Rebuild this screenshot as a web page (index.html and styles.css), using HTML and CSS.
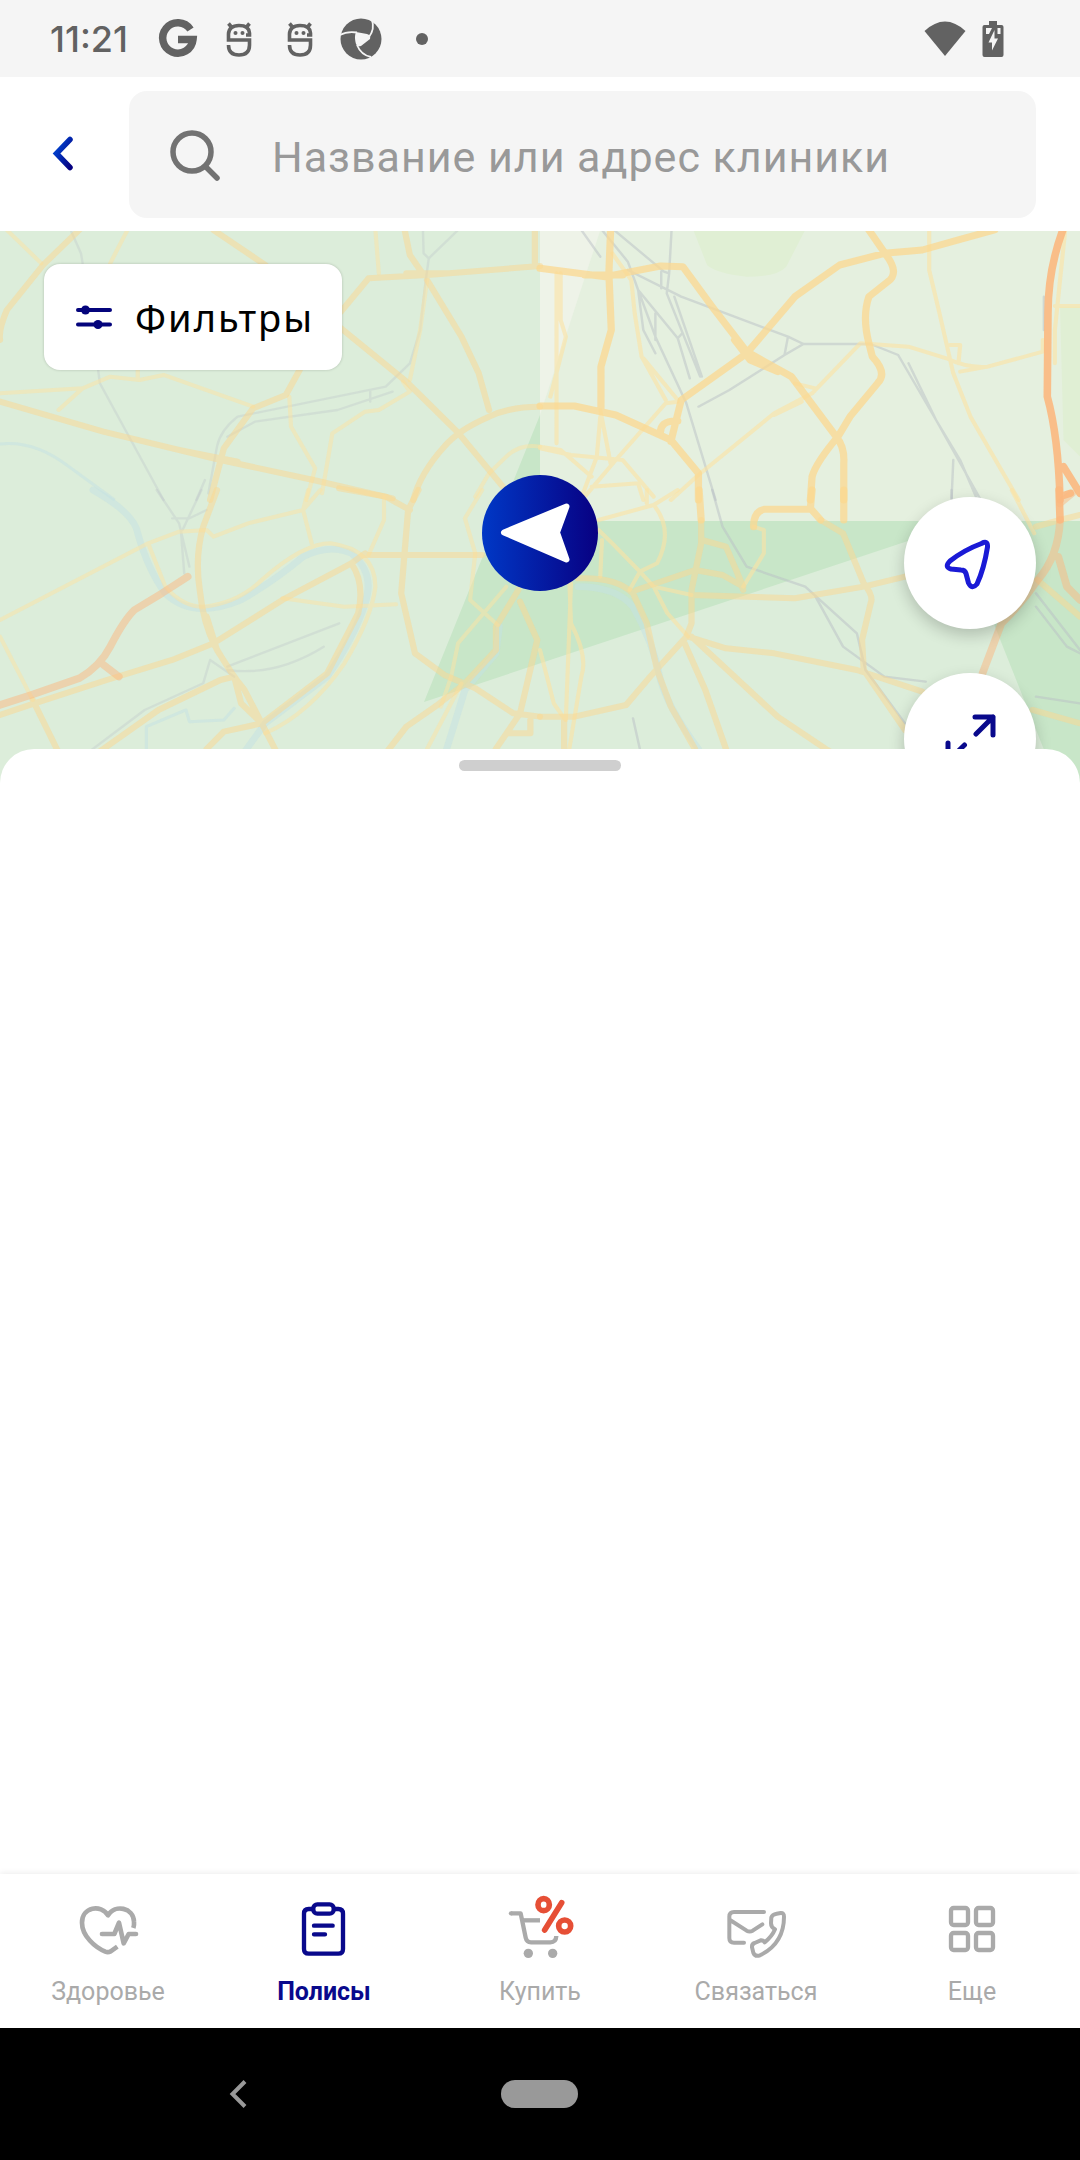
FILE: index.html
```html
<!DOCTYPE html>
<html lang="ru">
<head>
<meta charset="utf-8">
<meta name="viewport" content="width=device-width, initial-scale=1">
<title>Клиники</title>
<link rel="stylesheet" href="styles.css">
</head>
<body>
<div class="status">
  <span class="clock">11:21</span>
  <div class="notices">
    <svg class="notice" viewBox="0 0 44 44" aria-hidden="true"><path d="M34.5 12.5A15.200 15.200 0 1 0 37 22.500H22" fill="none" stroke="#626262" stroke-width="7.500"/></svg>
    <svg class="notice" viewBox="0 0 44 44" aria-hidden="true"><g fill="none" stroke="#626262" stroke-width="3.600"><path d="M29 18H32.500V16Q32 8.500 22 8.500T11.500 17V23H32.500V28Q32.500 38 22 38T11.500 28M14 9.500L11.500 6.500M30 9.500L32.500 6.500"/></g><circle cx="18.500" cy="16" r="2" fill="#626262"/><circle cx="25.500" cy="16" r="2" fill="#626262"/></svg>
    <svg class="notice" viewBox="0 0 44 44" aria-hidden="true"><g fill="none" stroke="#626262" stroke-width="3.600"><path d="M29 18H32.500V16Q32 8.500 22 8.500T11.500 17V23H32.500V28Q32.500 38 22 38T11.500 28M14 9.500L11.500 6.500M30 9.500L32.500 6.500"/></g><circle cx="18.500" cy="16" r="2" fill="#626262"/><circle cx="25.500" cy="16" r="2" fill="#626262"/></svg>
    <svg class="notice" viewBox="0 0 44 44" aria-hidden="true"><circle cx="22" cy="22" r="20.500" fill="#626262"/><path d="M17 15L28 17Q32 18 31 22L22 29Q18 30 17 27Q15 20 17 15Z" fill="#f5f5f5"/><path d="M1 18Q8 14 18 15.500M33 3Q36 12 30 20M18 28Q22 38 32 40" fill="none" stroke="#f5f5f5" stroke-width="1.800"/></svg>
    <svg class="notice" viewBox="0 0 44 44" aria-hidden="true"><circle cx="22" cy="22" r="6" fill="#626262"/></svg>
  </div>
  <div class="system">
    <svg class="wifi" viewBox="0 0 42 36" aria-hidden="true"><path d="M0.500 10Q21 -9 41.500 10L21 35Z" fill="#626262"/></svg>
    <svg class="battery" viewBox="0 0 22 36" aria-hidden="true"><path d="M7 0H15V4H19.500Q21.500 4 21.500 6V34Q21.500 36 19.500 36H2.500Q0.500 36 0.500 34V6Q0.500 4 2.500 4H7Z" fill="#626262"/><path d="M4 7H10L7 13H4ZM15.500 7H18.500V13H15.500ZM12.500 9V17.500H16L10 29.500V21.500H6.500Z" fill="#f5f5f5"/></svg>
  </div>
</div>

<header class="header">
  <button class="back" type="button" aria-label="Назад">
    <svg viewBox="0 0 40 40" aria-hidden="true"><defs><linearGradient id="ink" x1="0" y1="0" x2="1" y2="1"><stop offset="0.200" stop-color="#003cc8"/><stop offset="1" stop-color="#050080"/></linearGradient></defs><path d="M25 4.500L11.500 18.500L25 32.500" fill="none" stroke="url(#ink)" stroke-width="5.500" stroke-linecap="round"/></svg>
  </button>
  <label class="search">
    <svg class="search-icon" viewBox="0 0 56 56" aria-hidden="true"><circle cx="25" cy="25" r="19" fill="none" stroke="#727272" stroke-width="5.500"/><path d="M39 40L50 51" stroke="#727272" stroke-width="5.500" stroke-linecap="round"/></svg>
    <input class="search-input" type="search" placeholder="Название или адрес клиники" aria-label="Поиск клиники">
  </label>
</header>

<main class="main">
  <section class="map" aria-label="Карта">
    <svg class="map-canvas" viewBox="0 0 1080 554" preserveAspectRatio="xMidYMid slice" aria-hidden="true">
      <rect width="1080" height="554" fill="#dcedda"/>
      <path d="M540 0H1080V290H540Z" fill="#e5f0df"/>
      <path d="M540 0H600L540 184Z" fill="#eef3e8"/>
      <path d="M540 184V290H968L424 471ZM953 290H1080V554H1058Z" fill="#c8e6c8"/>

      <g class="tile west" transform="translate(0 -1) scale(.3444 .3333)">
        <g class="river"><path d="M0 642Q100 630 200 710L330 808"/></g>
        <g class="rail"><path d="M205 0L235 70L240 100M285 420L290 460L475 810M1228 0L1230 70L1245 85L1330 0M1245 85L1235 160L1220 300L1190 400L1120 470L690 560Q640 600 630 650L605 790M1140 485L980 540L740 575L660 620M1075 485V515M595 750L570 810"/></g>
        <g class="minor"><path d="M20 0L120 100M370 0L320 100M1090 0L1100 130M0 490L240 475L320 440L405 450L475 435L735 530M240 475L170 540M400 420V450M840 500L845 590L915 715L890 810M935 790L965 610L1060 545L1100 540L1190 485L1170 455M1240 150L1220 300L1190 450M1568 650Q1510 640 1470 680L1420 730L1380 800"/></g>
        <g class="major"><path d="M230 0L125 105L20 240Q-5 300 0 330M620 0L770 105L990 295L1180 455L1330 608L1460 770M1175 0L1190 75L1230 135M990 245L1070 145L1240 135L1568 108M1240 150L1340 320L1390 430L1420 540M1553 0V105M0 515L300 605L640 690L910 750L1140 805M870 420L830 495L735 535L650 655L610 810M1568 530Q1480 530 1420 560Q1330 600 1290 650Q1220 730 1200 810M1180 130H1310M520 660L690 695"/></g>
      </g>

      <g class="tile west" transform="translate(0 259) scale(.3444 .3333)">
        <g class="river wide"><path d="M270 0Q390 70 400 130Q430 240 480 310Q560 390 700 330Q800 270 880 200Q960 160 1020 190Q1090 250 1060 340Q1030 440 950 560L770 700L700 800M1260 900L1350 600L1440 490L1450 410"/></g>
        <g class="river"><path d="M425 900V710L540 660L550 695L650 690L680 655"/></g>
        <g class="rail"><path d="M455 0L520 100L550 230M585 0L530 120M500 85H550L600 60M525 120L535 250M660 540Q800 560 940 470M660 530L985 400M150 870L420 660L590 580L610 510L680 560"/></g>
        <g class="minor"><path d="M0 390L430 160L520 125L600 120L620 140L720 100L880 60L930 0M895 0L880 60L905 160M430 160L480 290Q530 350 590 350Q690 340 760 270Q880 160 960 160Q1090 180 1090 290Q1080 380 1000 520Q900 670 770 730M820 325L1000 350L1150 343M1115 20V90L1070 195M1400 0L1350 85L1380 190L1365 330L1445 405M1470 290L1330 460L1310 560L1280 650M1240 777L1340 580M0 440L95 630"/></g>
        <g class="major"><path d="M630 0L590 110Q565 200 580 300Q590 400 625 470Q670 550 710 600L760 700L860 900M600 380L630 480L670 545M985 -5L1120 20L1190 60M1215 0L1185 60L1165 310L1205 490L1290 555L1380 595L1490 670L1568 680M1060 195H1400M0 675L100 640L310 570L500 510L620 460L820 330L1020 220L1060 190M1020 220Q1060 280 1040 370L950 550L760 700L650 725L600 777M200 850L460 660L640 570L680 560L700 640L760 700M95 630L165 777L200 860M1090 830L1180 710L1270 645L1350 580M1350 580L1440 480L1440 410L1505 300M1510 335L1560 450L1510 670L1440 777M1480 730H1540V690"/></g>
        <g class="trunk"><path d="M0 645L90 615L230 565Q290 530 320 470Q360 390 390 360L470 310L545 260M295 520L345 560"/></g>
      </g>

      <g class="tile" transform="translate(540 -1) scale(.3444 .3333)">
        <path d="M445 0H770L715 110Q690 140 600 140Q510 130 485 105ZM1510 230H1568V680L1520 630Z" fill="#e0efd4"/>
        <g class="rail"><path d="M120 0L175 80M180 0L255 95L285 180L335 320L425 520L510 810M215 0L360 125L375 130L382 0M255 120L410 200L720 320L765 342H960L1040 375L1150 570L1280 810M765 342L710 375L550 480L460 530M375 130L368 190L465 440M285 180L400 325L435 445M400 325L413 310M335 250V330M352 125V175M1200 690L1195 810M720 320L710 375M1070 400L1150 570L1220 690L1270 810M285 180L300 300L335 370M390 200L470 440M1463 200V300"/></g>
        <g class="minor"><path d="M48 130V640M60 130V270L75 320L30 500M265 150L275 250L295 380L365 510M400 510L300 385M400 515L365 520L220 690L130 800M380 810L460 735L680 550L790 490L930 340L1070 350L1180 385Q1240 415 1300 410L1460 365V330M680 555L760 515M740 460L800 475M1130 0V120L1160 250L1200 430L1250 560L1390 810M1190 345H1220L1215 400M1220 425L1300 410M1495 228H1568M1525 0L1495 300V400M0 655L90 675L240 690L330 800M0 650L60 660L150 740M175 540L205 700M150 770L285 760L300 810M175 560L165 680L125 790M265 150L210 70"/></g>
        <g class="major"><path d="M0 115L190 140L350 108L415 110L500 230L600 365L730 440L860 620Q885 650 882 700V810M205 0L200 130L207 300L177 410V540M0 528H100L220 555L380 630L460 730V810M380 635L410 510L600 370L740 200L870 105L1000 70L1110 60L1220 28L1320 0M955 0L1005 75Q1045 130 1010 155L955 200Q935 260 955 340L965 380Q1010 430 980 460L900 560L865 620Q800 700 790 740L785 810M350 615Q345 570 400 573M565 330L610 390L690 425M130 135H240"/></g>
        <g class="trunk"><path d="M1518 0Q1475 120 1475 250L1473 500Q1505 620 1510 810M1520 710L1568 790M1510 800L1540 790"/></g>
      </g>

      <g class="tile" transform="translate(540 259) scale(.3444 .3333)">
        <g class="river wide"><path d="M110 290Q220 290 270 350Q330 460 350 570Q370 650 460 777"/></g>
        <g class="rail"><path d="M500 0L530 110L600 230L770 290L920 430L945 540L1060 700M800 320L880 470L1000 560L1120 575M1440 310L1568 480M1195 0V25M1440 620L1568 640M1440 350L1530 470L1568 490M270 685L290 777"/></g>
        <g class="minor"><path d="M170 90L330 45L400 0M330 45Q390 120 340 220L290 245L260 300M170 120L210 160L290 245L330 290L370 370L430 440M85 270L90 400Q140 500 120 560L85 777M90 280L75 690M0 480L40 640L70 685M180 150L175 260M310 0V40M620 110L650 120V190L590 290M330 290L440 315M1370 0L1435 130"/></g>
        <g class="major soft"><path d="M815 90L880 130L940 280Q970 320 960 340L935 450L940 540L1060 720M440 315L740 325L940 290L1060 260M470 150L540 170L590 290L530 255L450 240L280 300M430 440L540 475L680 490L920 540L1110 605M440 440L690 680L830 777L900 820M420 460L480 600L540 777M340 540L380 650L450 777M110 265Q220 260 270 310L310 400L340 540M70 685V777M1440 110L1510 90L1568 75M1430 660L1568 700M1445 270L1568 380M100 680L250 645L320 560L425 440L440 400V300L468 160V90M100 680H0M570 240L590 300"/></g>
        <g class="major"><path d="M462 0L468 90M790 0L785 55L815 90M785 58H650Q620 65 620 110M882 0V90"/></g>
        <g class="trunk"><path d="M1507 0L1510 90"/></g>
        <g class="trunk soft"><path d="M1510 90Q1505 200 1445 270Q1400 340 1340 400L1285 550M1505 200L1530 290L1568 330M1545 10L1510 40"/></g>
      </g>
    </svg>

    <button class="filters" type="button">
      <svg class="filters-icon" viewBox="0 0 36 24" aria-hidden="true"><path d="M2 5H34M2 19.500H34" stroke="#04047c" stroke-width="4" stroke-linecap="round"/><circle cx="9.500" cy="5" r="4.500" fill="#04047c"/><circle cx="22" cy="19.500" r="4.500" fill="#04047c"/></svg>
      Фильтры
    </button>

    <svg class="marker" viewBox="0 0 116 116" role="img" aria-label="Клиника"><defs><linearGradient id="pin"><stop offset="0" stop-color="#0038c6"/><stop offset="1" stop-color="#080082"/></linearGradient></defs><circle cx="58" cy="58" r="58" fill="url(#pin)"/><path d="M22 57.500L84.500 31.500L75 57.500L84.500 84.500Z" fill="#fff" stroke="#fff" stroke-width="6" stroke-linejoin="round"/></svg>

    <div class="map-controls">
      <button class="round" type="button" aria-label="Моё местоположение">
        <svg viewBox="0 0 132 132" aria-hidden="true"><path d="M77.500 46.500Q84 43 83.500 50Q80 72 73 87Q68 93 64.500 86L62 76.500Q61 73 57 73L47 72Q40 70 46 64Q60 53 77.500 46.500Z" fill="none" stroke="#1a1ad6" stroke-width="5" stroke-linejoin="round"/></svg>
      </button>
      <button class="round" type="button" aria-label="На весь экран">
        <svg viewBox="0 0 132 132" aria-hidden="true"><path d="M71 44H89V62M89 44L72 61M44 70V88H62M44 88L60.500 72" fill="none" stroke="#09098c" stroke-width="5" stroke-linecap="round" stroke-linejoin="round"/></svg>
      </button>
    </div>
  </section>

  <section class="sheet" aria-label="Список клиник">
    <div class="grip"></div>
  </section>
</main>

<nav class="tabs">
  <a class="tab" href="#health">
    <svg class="tab-icon" viewBox="216 102 216 216" aria-hidden="true"><g fill="none" stroke="currentColor" stroke-width="14" stroke-linejoin="round"><path d="M400 204Q403 195 402 185C400 142 345 132 324 166C303 132 246 140 246 188C246 228 285 262 316 275Q324 278 332 274L352 260"/><path d="M306 222H343L357 188L371 250L386 222H408" stroke-linecap="round"/></g></svg>
    Здоровье
  </a>
  <a class="tab current" href="#policies" aria-current="page">
    <svg class="tab-icon" viewBox="864 102 216 216" aria-hidden="true"><g fill="none" stroke="currentColor" stroke-width="13" stroke-linecap="round"><path d="M936 147H926Q912 147 912 161V267Q912 281 926 281H1015Q1029 281 1029 267V161Q1029 147 1015 147H1005M942 197H998M942 223H975"/><rect x="940" y="133" width="61" height="28" rx="12"/></g></svg>
    Полисы
  </a>
  <a class="tab" href="#buy">
    <svg class="tab-icon" viewBox="222 102 216 216" aria-hidden="true"><g fill="none" stroke="currentColor" stroke-width="13"><path d="M243 160H272L287 233Q290 247 303 247H361Q378 247 379 228" stroke-linejoin="round"/><path d="M276 181H330"/></g><circle cx="243" cy="160" r="6.500" fill="currentColor"/><circle cx="295" cy="280" r="14" fill="currentColor"/><circle cx="368" cy="280" r="14" fill="currentColor"/><g fill="none" stroke="#e64f36" stroke-width="17" stroke-linecap="round"><ellipse cx="341" cy="134" rx="17" ry="18"/><ellipse cx="404" cy="198" rx="18" ry="18"/><path d="M395 128L344 210"/></g></svg>
    Купить
  </a>
  <a class="tab" href="#contact">
    <svg class="tab-icon" viewBox="870 102 216 216" aria-hidden="true"><g fill="none" stroke="currentColor" stroke-width="12" stroke-linecap="round" stroke-linejoin="round"><path d="M1002 156H912Q898 156 898 170V234Q898 248 912 248H942M900 180L950 212Q959 217 968 212L997 193"/><path d="M1040 161L1052 159Q1062 158 1062 170Q1062 250 990 286Q975 291 970 278L966 262Q965 252 974 249L992 241Q999 240 1004 247Q1026 230 1035 208Q1023 202 1023 190L1024 172Q1027 163 1040 161Z"/></g></svg>
    Связаться
  </a>
  <a class="tab" href="#more">
    <svg class="tab-icon" viewBox="348 102 216 216" aria-hidden="true"><g fill="none" stroke="currentColor" stroke-width="13"><rect x="393" y="144" width="51" height="51" rx="8"/><rect x="468" y="144" width="51" height="51" rx="8"/><rect x="393" y="219" width="51" height="51" rx="8"/><rect x="468" y="219" width="51" height="51" rx="8"/></g></svg>
    Еще
  </a>
</nav>

<div class="system-nav">
  <button class="system-button" type="button" aria-label="Назад"><svg viewBox="0 0 28 28" aria-hidden="true"><path d="M20 1.500L7.500 14L20 26.500" fill="none" stroke="#999" stroke-width="4"/></svg></button>
  <button class="system-button" type="button" aria-label="Домой"><span class="pill"></span></button>
</div>
</body>
</html>
```

FILE: styles.css
```css
* {
  box-sizing: border-box;
}

body {
  margin: 0;
  min-height: 100vh;
  display: flex;
  flex-direction: column;
  background: #fff;
  font-family: Roboto, "Liberation Sans", sans-serif;
}

button {
  padding: 0;
  border: 0;
  background: none;
  color: inherit;
  font: inherit;
}

svg {
  display: block;
}

/* Status bar */
.status {
  display: flex;
  align-items: center;
  height: 77px;
  padding: 0 76px 0 50px;
  background: #f5f5f5;
  color: #626262;
}

.clock {
  width: 106px;
  font: 500 36px/44px Inter, sans-serif;
}

.notices {
  display: flex;
  gap: 17px;
}

.notice {
  width: 44px;
  height: 44px;
}

.system {
  display: flex;
  gap: 16px;
  margin-left: auto;
}

.wifi {
  width: 42px;
  height: 36px;
}

.battery {
  width: 22px;
  height: 36px;
}

/* Search header */
.header {
  display: flex;
  align-items: center;
  padding: 14px 44px 13px 0;
}

.back {
  display: flex;
  justify-content: center;
  width: 129px;
}

.back svg {
  width: 40px;
  height: 40px;
}

.search {
  display: flex;
  flex: 1;
  align-items: center;
  gap: 49px;
  height: 127px;
  padding: 0 38px;
  border-radius: 18px;
  background: #f5f5f5;
}

.search-icon {
  flex: none;
  width: 56px;
  height: 56px;
}

.search-input {
  flex: 1;
  min-width: 0;
  padding: 4px 0 0;
  border: 0;
  outline: 0;
  background: none;
  color: #222;
  font: 400 43px/56px Roboto, sans-serif;
  letter-spacing: 1px;
}

.search-input::placeholder {
  color: #999;
  opacity: 1;
}

/* Map */
.main {
  display: flex;
  flex: 1;
  flex-direction: column;
}

.map {
  position: relative;
  aspect-ratio: 540 / 277;
  overflow: hidden;
}

.map-canvas {
  width: 100%;
  height: 100%;
}

.tile {
  fill: none;
  stroke-linecap: round;
  stroke-linejoin: round;
}

.river {
  stroke: #c3e2e4;
  stroke-width: 9;
  opacity: 0.5;
}

.river.wide {
  stroke-width: 20;
}

.rail {
  stroke: #b9bfc6;
  stroke-width: 7;
  opacity: 0.5;
}

.minor {
  stroke: #fbe3a4;
  stroke-width: 12;
  opacity: 0.6;
}

.major {
  stroke: #fbd890;
  stroke-width: 21;
  opacity: 0.75;
}

.trunk {
  stroke: #fbb880;
  stroke-width: 22;
  opacity: 0.9;
}

.west .rail {
  opacity: 0.3;
}

.west .minor,
.west .major,
.soft {
  opacity: 0.5;
}

.west .major,
.major.soft {
  stroke-width: 18;
}

.west .trunk {
  opacity: 0.5;
}

.filters {
  position: absolute;
  top: 33px;
  left: 44px;
  display: flex;
  align-items: center;
  gap: 23px;
  height: 106px;
  padding: 0 28px 0 32px;
  border-radius: 16px;
  background: #fff;
  box-shadow: 0 0 3px rgb(0 0 0 / 20%);
  color: #000;
  font: 400 38px/52px "Noto Sans", sans-serif;
  letter-spacing: 2px;
}

.filters-icon {
  width: 36px;
  height: 24px;
}

.marker {
  position: absolute;
  top: 244px;
  left: calc(50% - 58px);
  width: 116px;
  height: 116px;
}

.map-controls {
  position: absolute;
  top: 266px;
  right: 44px;
  display: grid;
  gap: 44px;
}

.round {
  width: 132px;
  height: 132px;
  border-radius: 50%;
  background: #fff;
  box-shadow: 0 6px 16px rgb(0 0 0 / 20%);
}

/* Bottom sheet */
.sheet {
  position: relative;
  flex: 1;
  margin-top: -36px;
  padding-top: 11px;
  border-radius: 34px 34px 0 0;
  background: #fff;
}

.grip {
  width: 162px;
  height: 11px;
  margin: 0 auto;
  border-radius: 6px;
  background: #cfcfcf;
}

/* Tab bar */
.tabs {
  position: relative;
  display: grid;
  grid-template-columns: repeat(5, 1fr);
  padding: 20px 0;
  background: #fff;
  box-shadow: 0 -1px 6px rgb(0 0 0 / 8%);
}

.tab {
  display: flex;
  flex-direction: column;
  align-items: center;
  gap: 10px;
  color: #aaa;
  font-size: 25px;
  line-height: 32px;
  text-decoration: none;
}

.tab.current {
  color: #09098c;
  font-weight: 700;
}

.tab-icon {
  width: 72px;
  height: 72px;
}

/* System navigation */
.system-nav {
  position: relative;
  display: grid;
  grid-template-columns: repeat(3, 1fr);
  align-items: center;
  height: 132px;
  padding: 0 88px;
  background: #000;
}

.system-button {
  display: flex;
  justify-content: center;
}

.system-button svg {
  width: 28px;
  height: 28px;
}

.pill {
  width: 77px;
  height: 28px;
  border-radius: 14px;
  background: #999;
}
```
